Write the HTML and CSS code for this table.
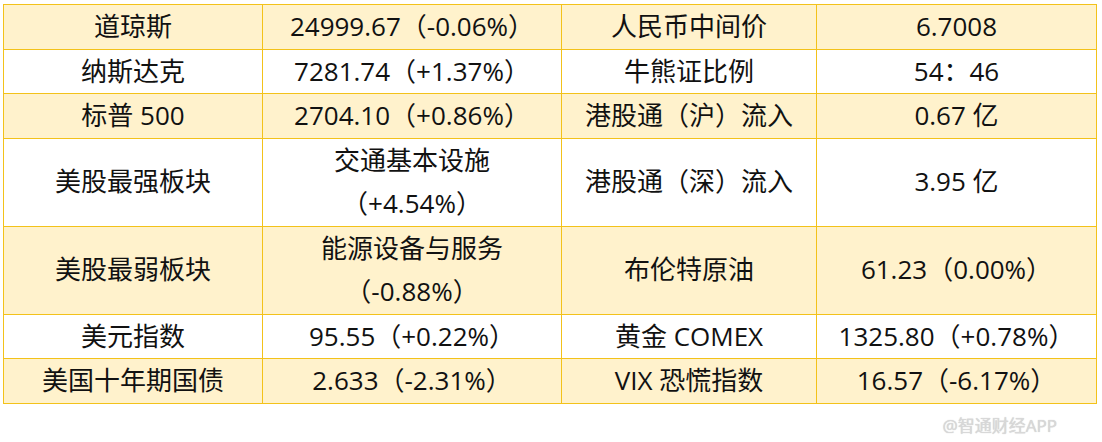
FILE: index.html
```html
<!DOCTYPE html>
<html>
<head>
    <title>美股市场数据</title>
    <meta charset="UTF-8">
    <link rel="stylesheet" href="styles.css">
</head>
<body>
    <div class="board">
        <table class="market-table">
            <colgroup>
                <col class="col-name">
                <col class="col-value">
                <col class="col-name2">
                <col class="col-value2">
            </colgroup>
            <tr class="shade">
                <td>道琼斯</td>
                <td>24999.67（-0.06%）</td>
                <td>人民币中间价</td>
                <td>6.7008</td>
            </tr>
            <tr>
                <td>纳斯达克</td>
                <td>7281.74（+1.37%）</td>
                <td>牛熊证比例</td>
                <td>54：46</td>
            </tr>
            <tr class="shade">
                <td>标普 500</td>
                <td>2704.10（+0.86%）</td>
                <td>港股通（沪）流入</td>
                <td>0.67 亿</td>
            </tr>
            <tr>
                <td>美股最强板块</td>
                <td>交通基本设施<br>（+4.54%）</td>
                <td>港股通（深）流入</td>
                <td>3.95 亿</td>
            </tr>
            <tr class="shade">
                <td>美股最弱板块</td>
                <td>能源设备与服务<br>（-0.88%）</td>
                <td>布伦特原油</td>
                <td>61.23（0.00%）</td>
            </tr>
            <tr>
                <td>美元指数</td>
                <td>95.55（+0.22%）</td>
                <td>黄金 COMEX</td>
                <td>1325.80（+0.78%）</td>
            </tr>
            <tr class="shade">
                <td>美国十年期国债</td>
                <td>2.633（-2.31%）</td>
                <td>VIX 恐慌指数</td>
                <td>16.57（-6.17%）</td>
            </tr>
        </table>
        <div class="watermark">@智通财经APP</div>
    </div>
</body>
</html>
```

FILE: styles.css
```css
body {
    margin: 0;
    background: #fff;
    font-family: "Open Sans", "Noto Sans CJK SC", sans-serif;
    color: #111;
}
.board {
    padding: 4px 0 0 3px;
    width: 1092px;
}
.market-table {
    width: 1093px;
    border-collapse: collapse;
    table-layout: fixed;
}
.col-name {
    width: 259px;
}
.col-value {
    width: 299px;
}
.col-name2 {
    width: 255px;
}
.col-value2 {
    width: 280px;
}
.market-table td {
    border: 1px solid #f3c21a;
    text-align: center;
    font-size: 26px;
    line-height: 43.5px;
    height: 43.5px;
    padding: 0;
    white-space: nowrap;
}
.shade td {
    background: #fff2cc;
}
.watermark {
    text-align: right;
    padding-right: 38px;
    margin-top: 12px;
    font-size: 17px;
    line-height: 20px;
    color: #d8d8d8;
    text-shadow: 0 0 1px #c4c4c4;
}
```
